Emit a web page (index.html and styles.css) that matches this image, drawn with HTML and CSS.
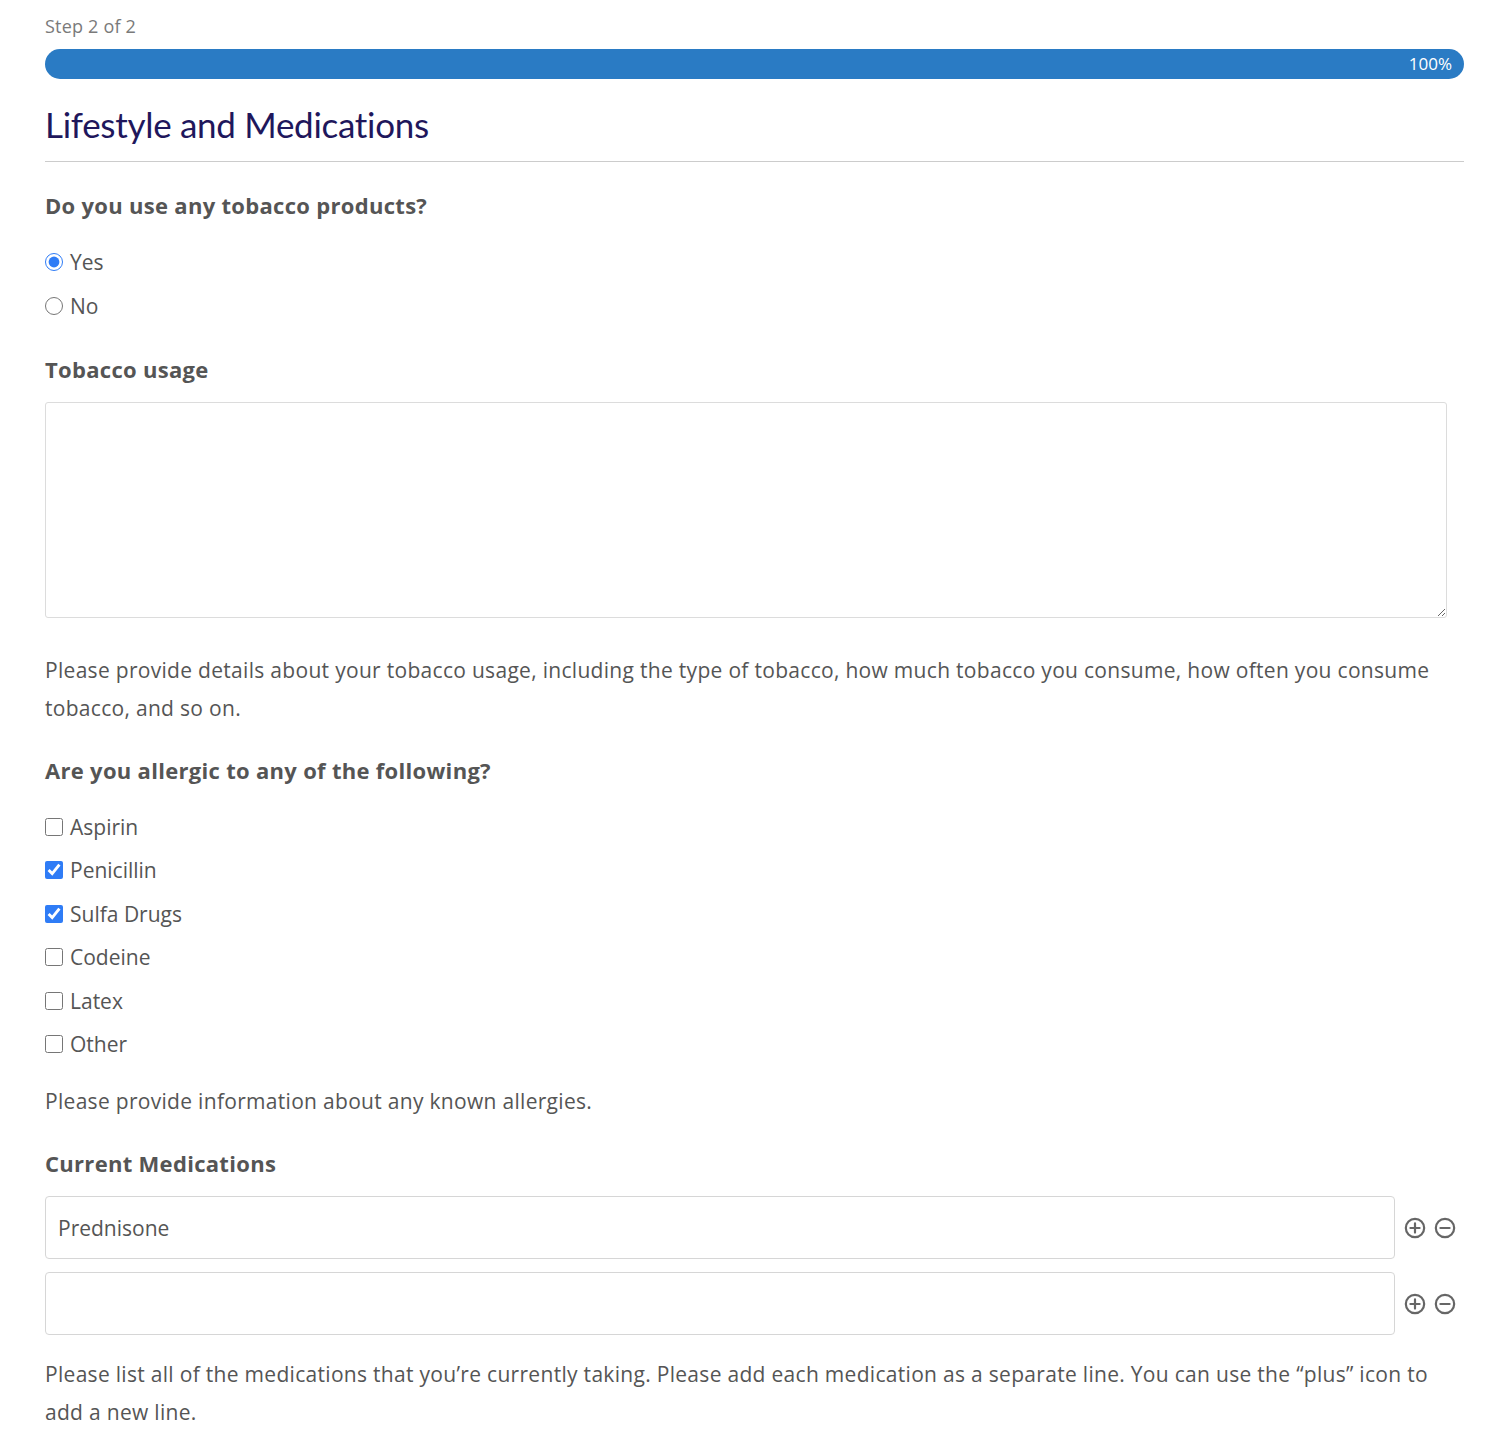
FILE: index.html
```html
<!DOCTYPE html>
<html lang="en">
<head>
<meta charset="utf-8">
<title>Lifestyle and Medications</title>
<link rel="stylesheet" href="styles.css">
</head>
<body>
<div class="page">
  <div class="step">Step 2 of 2</div>
  <div class="progress"><div class="progress-fill">100%</div></div>
  <h1 class="title">Lifestyle and Medications</h1>
  <hr class="rule">

  <div class="field">
    <div class="label">Do you use any tobacco products?</div>
    <div class="options">
      <label class="option"><input type="radio" name="tobacco" checked><span>Yes</span></label>
      <label class="option"><input type="radio" name="tobacco"><span>No</span></label>
    </div>
  </div>

  <div class="field field-usage">
    <div class="label">Tobacco usage</div>
    <textarea class="textarea"></textarea>
    <p class="help help-usage">Please provide details about your tobacco usage, including the type of tobacco, how much tobacco you consume, how often you consume tobacco, and so on.</p>
  </div>

  <div class="field field-allergy">
    <div class="label">Are you allergic to any of the following?</div>
    <div class="options">
      <label class="option"><input type="checkbox"><span>Aspirin</span></label>
      <label class="option"><input type="checkbox" checked><span>Penicillin</span></label>
      <label class="option"><input type="checkbox" checked><span>Sulfa Drugs</span></label>
      <label class="option"><input type="checkbox"><span>Codeine</span></label>
      <label class="option"><input type="checkbox"><span>Latex</span></label>
      <label class="option"><input type="checkbox"><span>Other</span></label>
    </div>
    <p class="help help-allergy">Please provide information about any known allergies.</p>
  </div>

  <div class="field field-meds">
    <div class="label">Current Medications</div>
    <div class="rows">
      <div class="row">
        <input class="text-input" type="text" value="Prednisone">
        <div class="icons">
          <svg class="icon" viewBox="0 0 24 24"><circle cx="12" cy="12" r="10"/><path d="M12 7v10M7 12h10"/></svg>
          <svg class="icon" viewBox="0 0 24 24"><circle cx="12" cy="12" r="10"/><path d="M7 12h10"/></svg>
        </div>
      </div>
      <div class="row">
        <input class="text-input" type="text" value="">
        <div class="icons">
          <svg class="icon" viewBox="0 0 24 24"><circle cx="12" cy="12" r="10"/><path d="M12 7v10M7 12h10"/></svg>
          <svg class="icon" viewBox="0 0 24 24"><circle cx="12" cy="12" r="10"/><path d="M7 12h10"/></svg>
        </div>
      </div>
    </div>
    <p class="help help-meds">Please list all of the medications that you’re currently taking. Please add each medication as a separate line. You can use the “plus” icon to add a new line.</p>
  </div>
</div>
</body>
</html>
```

FILE: styles.css
```css
html, body {
  margin: 0;
  padding: 0;
  background: #ffffff;
}

body {
  font-family: "Open Sans", "Noto Sans", sans-serif;
  color: #555555;
}

.page {
  padding: 13px 36px 0 45px;
}

.step {
  font-size: 18px;
  line-height: 26px;
  color: #7a7a7a;
  letter-spacing: 0.2px;
}

.progress {
  margin-top: 10px;
  height: 30px;
  border-radius: 15px;
  background: #e9ecef;
  overflow: hidden;
}

.progress-fill {
  width: 100%;
  height: 100%;
  background: #2a7bc4;
  color: #ffffff;
  font-size: 17px;
  line-height: 30px;
  text-align: right;
  padding-right: 12px;
  box-sizing: border-box;
}

.title {
  margin: 25px 0 0;
  font-family: "Lato", "Open Sans", sans-serif;
  font-size: 35px;
  line-height: 40px;
  font-weight: 400;
  color: #1f175c;
  letter-spacing: -0.3px;
}

.rule {
  margin: 17px 0 0;
  border: 0;
  border-top: 1px solid #cccccc;
  height: 0;
}

.field {
  margin-top: 29px;
}

.field-usage {
  margin-top: 35px;
}

.label {
  font-size: 22px;
  line-height: 28px;
  font-weight: 700;
  color: #555555;
  letter-spacing: 0.3px;
}

.options {
  margin-top: 29px;
  display: flex;
  flex-direction: column;
  gap: 15.5px;
}

.option {
  display: flex;
  align-items: center;
  height: 28px;
  font-size: 21px;
  color: #555555;
}

.option input {
  margin: 0 7px 0 0;
  width: 18px;
  height: 18px;
  accent-color: #2f7cf6;
}

.textarea {
  display: block;
  margin-top: 19px;
  width: 1402px;
  height: 216px;
  box-sizing: border-box;
  border: 1px solid #dcdcdc;
  border-radius: 3px;
  resize: vertical;
  font: inherit;
}

.help {
  margin: 0;
  max-width: 1400px;
  font-size: 21px;
  line-height: 38px;
  color: #555555;
  letter-spacing: 0.3px;
}

.help-usage {
  margin-top: 33px;
}

.help-allergy {
  margin-top: 24px;
}

.rows {
  margin-top: 19px;
  display: flex;
  flex-direction: column;
  gap: 13px;
}

.row {
  display: flex;
  align-items: center;
}

.text-input {
  width: 1350px;
  height: 63px;
  box-sizing: border-box;
  border: 1px solid #d6d6d6;
  border-radius: 4px;
  padding: 0 12px;
  font-family: inherit;
  font-size: 21px;
  color: #555555;
  outline: none;
}

.icons {
  display: flex;
  gap: 8px;
  margin-left: 9px;
}

.icon {
  width: 22px;
  height: 22px;
  fill: none;
  stroke: #666666;
  stroke-width: 2.4;
  stroke-linecap: round;
}

.help-meds {
  margin-top: 20px;
}
```
